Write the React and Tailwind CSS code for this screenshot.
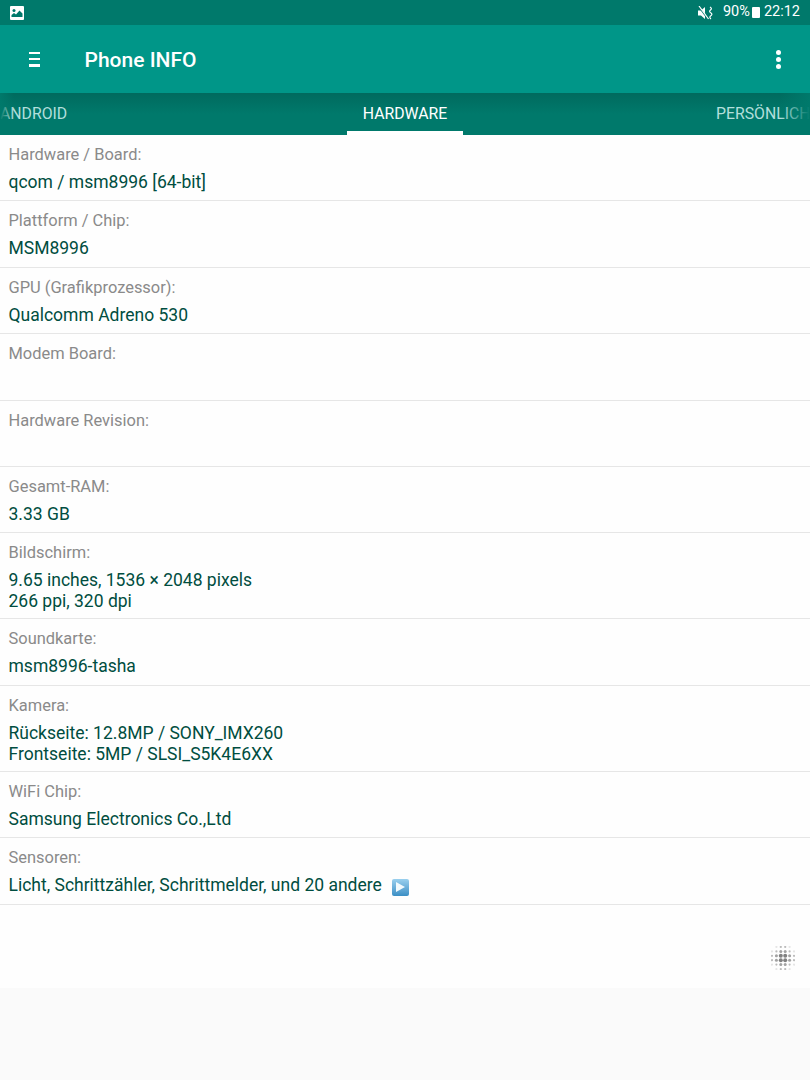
import { useState } from 'react'

const ROWS = [
  { label: 'Hardware / Board:', lines: ['qcom / msm8996 [64-bit]'], h: 'h-[66px]' },
  { label: 'Plattform / Chip:', lines: ['MSM8996'], h: 'h-[67px]' },
  { label: 'GPU (Grafikprozessor):', lines: ['Qualcomm Adreno 530'], h: 'h-[66px]' },
  { label: 'Modem Board:', lines: [], h: 'h-[67px]' },
  { label: 'Hardware Revision:', lines: [], h: 'h-[66px]' },
  { label: 'Gesamt-RAM:', lines: ['3.33 GB'], h: 'h-[66px]' },
  { label: 'Bildschirm:', lines: ['9.65 inches, 1536 × 2048 pixels', '266 ppi, 320 dpi'], h: 'h-[86px]' },
  { label: 'Soundkarte:', lines: ['msm8996-tasha'], h: 'h-[67px]' },
  { label: 'Kamera:', lines: ['Rückseite: 12.8MP / SONY_IMX260', 'Frontseite: 5MP / SLSI_S5K4E6XX'], h: 'h-[86px]' },
  { label: 'WiFi Chip:', lines: ['Samsung Electronics Co.,Ltd'], h: 'h-[66px]' },
  { label: 'Sensoren:', lines: ['Licht, Schrittzähler, Schrittmelder, und 20 andere'], h: 'h-[67px]', play: true },
]

function PlayBadge() {
  return (
    <span className="ml-[10px] inline-flex w-[17px] h-[17px] rounded-[2px] bg-gradient-to-b from-[#9ad0ee] to-[#3a8fc5] items-center justify-center align-[-2px]">
      <svg width="12" height="12" viewBox="0 0 12 12"><path d="M2 1 L11 6 L2 11 Z" fill="#f2fafd" /></svg>
    </span>
  )
}

function DotGrid() {
  // soft dot cluster, bigger and darker toward the middle
  const dots = []
  for (let y = 0; y < 6; y++) {
    for (let x = 0; x < 6; x++) {
      const d = Math.hypot(x - 2.5, y - 2.5)
      if (d > 3.2) continue
      const r = d < 1 ? 2 : d < 2 ? 1.5 : 1.1
      const o = d < 1 ? 0.75 : d < 2 ? 0.55 : d < 2.7 ? 0.4 : 0.15
      dots.push(<circle key={x + '-' + y} cx={1 + x * 4.4} cy={1 + y * 4.4} r={r} fill="#555" opacity={o} />)
    }
  }
  return <svg width="24" height="24" viewBox="0 0 24 24" className="blur-[0.4px]">{dots}</svg>
}

export default function App() {
  const [tab] = useState('HARDWARE')

  return (
    <div className="w-[810px] h-[1080px] overflow-hidden flex flex-col bg-[#fafafa] font-['Roboto',sans-serif]">
      <div className="h-[25px] bg-[#00796b] flex items-center justify-between px-[10px] text-white">
        <svg width="14" height="14" viewBox="0 0 14 14">
          <rect width="14" height="14" rx="1" fill="#fff" />
          <circle cx="4" cy="4.5" r="1.5" fill="#00796b" />
          <path d="M1.5 11 L1.5 9 L4 7 L6 8.5 L9.5 4.5 L12.5 7.5 L12.5 11 Z" fill="#00796b" />
        </svg>
        <div className="flex items-center text-[14.5px] leading-none">
          <svg width="16" height="14" viewBox="0 0 16 14" className="mr-[9px]">
            <path d="M0 4.5 H3 L7 1 V13 L3 9.5 H0 Z" fill="#fff" />
            <path d="M1 1 L10 13" stroke="#00796b" strokeWidth="1.4" />
            <path d="M1 0 L10.5 13" stroke="#fff" strokeWidth="1.2" />
            <path d="M12 1 Q14.5 2.5 12.5 4 Q10.5 5.5 13 7 Q15 8.5 12.5 10 Q11 11.5 13 13" stroke="#fff" strokeWidth="1.2" fill="none" />
          </svg>
          <span>90%</span>
          <span className="ml-[2px] w-[8px] h-[11px] bg-white rounded-[1px]" />
          <span className="ml-[4px]">22:12</span>
        </div>
      </div>

      <div className="h-[68px] bg-[#009688] flex items-center text-white">
        <div className="w-[84.5px] pl-[29px]">
          <div className="w-[11px] flex flex-col gap-[4px]">
            <div className="h-[2px] bg-white" />
            <div className="h-[2px] bg-white" />
            <div className="h-[3px] bg-white" />
          </div>
        </div>
        <div className="text-[21px] font-medium relative top-[2px]">Phone INFO</div>
        <div className="ml-auto pr-[29px] flex flex-col gap-[2px]">
          <div className="w-[5px] h-[5px] rounded-full bg-white" />
          <div className="w-[5px] h-[5px] rounded-full bg-white" />
          <div className="w-[5px] h-[5px] rounded-full bg-white" />
        </div>
      </div>

      <div className="h-[42px] bg-gradient-to-b from-[#006a5e] via-[#00796b] to-[#00796b] relative text-[15.8px] leading-[20px] overflow-hidden">
        <span className="absolute left-0 top-[11px] text-[#b2dfdb]">ANDROID</span>
        <span className="absolute left-[347px] w-[116px] top-[11px] text-center text-white">{tab}</span>
        <div className="absolute left-[347px] w-[116px] bottom-0 h-[4px] bg-white" />
        <span className="absolute left-[716px] top-[11px] text-[#b2dfdb]">PERSÖNLICH</span>
        <div className="absolute right-0 top-0 h-full w-[30px] bg-gradient-to-r from-transparent to-[#00796b]" />
        <div className="absolute left-0 top-0 h-full w-[14px] bg-gradient-to-r from-[#00796b] to-transparent" />
      </div>

      <div className="bg-[#fefefe] h-[853px] relative">
        {ROWS.map(r => (
          <div key={r.label} className={`${r.h} border-b border-[#e6e6e6] pl-[8.5px] pt-[10px]`}>
            <div className="text-[16.45px] leading-[20px] text-[#8a8a8a]">{r.label}</div>
            <div className="mt-[7px] text-[17.5px] leading-[21px] text-[#004d40]">
              {r.lines.map(l => (
                <div key={l}>{l}{r.play && <PlayBadge />}</div>
              ))}
            </div>
          </div>
        ))}
        <div className="absolute left-[771px] top-[811px]"><DotGrid /></div>
      </div>
    </div>
  )
}
